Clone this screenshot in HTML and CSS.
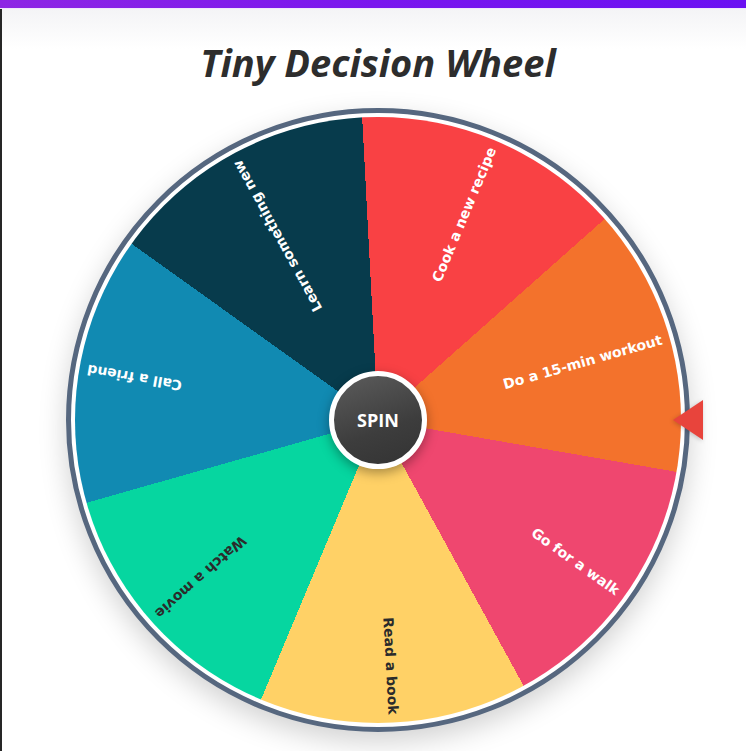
FILE: index.html
```html
<!DOCTYPE html>
<html lang="en">
<head>
<meta charset="utf-8">
<title>Tiny Decision Wheel</title>
<link rel="stylesheet" href="styles.css">
</head>
<body>
<div class="topbar"></div>
<main class="app">
  <h1 class="title">Tiny Decision Wheel</h1>
  <div class="wheel-wrap">
    <div class="wheel">
      <div class="face">
        <div class="label light" style="transform: rotate(-67.29deg)">Cook a new recipe</div>
        <div class="label light" style="transform: rotate(-15.86deg)">Do a 15-min workout</div>
        <div class="label light" style="transform: rotate(35.57deg)">Go for a walk</div>
        <div class="label dark" style="transform: rotate(87deg)">Read a book</div>
        <div class="label dark" style="transform: rotate(138.43deg)">Watch a movie</div>
        <div class="label light" style="transform: rotate(189.86deg)">Call a friend</div>
        <div class="label light" style="transform: rotate(241.29deg)">Learn something new</div>
      </div>
    </div>
    <button class="spin" type="button">SPIN</button>
    <div class="pointer"></div>
  </div>
</main>
</body>
</html>
```

FILE: styles.css
```css
* { box-sizing: border-box; }
html, body { margin: 0; padding: 0; }
body {
  background: #ffffff;
  font-family: "Open Sans", "Liberation Sans", sans-serif;
  height: 751px;
  overflow: hidden;
}
.topbar {
  height: 9px;
  background: linear-gradient(90deg, #8e26e4 0%, #7a16ee 50%, #6b10f2 100%);
  border-bottom: 1px solid #f1e6fb;
}
.app {
  border-left: 2px solid #262626;
  padding-left: 8px;
  padding-top: 31px;
  height: 742px;
  background: linear-gradient(#f4f4f6 0px, #ffffff 40px);
  display: flex;
  flex-direction: column;
  align-items: center;
}
.title {
  margin: 0;
  font-family: "Open Sans", "Liberation Sans", sans-serif;
  font-style: italic;
  font-weight: 700;
  font-size: 38px;
  line-height: 44px;
  color: #2d2d2d;
  letter-spacing: 0;
}
.wheel-wrap {
  position: relative;
  width: 624px;
  height: 624px;
  margin-top: 24px;
}
.wheel {
  width: 624px;
  height: 624px;
  border-radius: 50%;
  border: 5px solid #56677f;
  background: #ffffff;
  padding: 4px;
  box-shadow: 0 10px 28px rgba(0, 0, 0, 0.18);
}
.face {
  position: relative;
  width: 100%;
  height: 100%;
  border-radius: 50%;
  overflow: hidden;
  background: conic-gradient(from -3deg,
    #f94144 0deg 51.43deg,
    #f3722c 51.43deg 102.86deg,
    #ef476f 102.86deg 154.29deg,
    #ffd166 154.29deg 205.71deg,
    #06d6a0 205.71deg 257.14deg,
    #118ab2 257.14deg 308.57deg,
    #073b4c 308.57deg 360deg);
}
.label {
  position: absolute;
  left: 50%;
  top: 50%;
  width: 295px;
  height: 20px;
  margin-top: -10px;
  line-height: 20px;
  transform-origin: 0 50%;
  text-align: right;
  font-family: "DejaVu Sans", "Noto Sans", sans-serif;
  font-weight: 700;
  font-size: 14px;
  white-space: nowrap;
}
.label.light { color: #ffffff; }
.label.dark { color: #2b2b2b; }
.spin {
  position: absolute;
  left: 50%;
  top: 50%;
  width: 98px;
  height: 98px;
  margin: -49px 0 0 -49px;
  border-radius: 50%;
  border: 5px solid #ffffff;
  background: linear-gradient(160deg, #5c5c5c 0%, #3d3d3d 60%, #333333 100%);
  box-shadow: 0 4px 12px rgba(0, 0, 0, 0.35);
  color: #ffffff;
  font-family: "Open Sans", "Liberation Sans", sans-serif;
  font-weight: 700;
  font-size: 18px;
  padding: 0;
  cursor: pointer;
}
.pointer {
  position: absolute;
  right: -13px;
  top: 50%;
  margin-top: -20px;
  width: 0;
  height: 0;
  border-top: 20px solid transparent;
  border-bottom: 20px solid transparent;
  border-right: 30px solid #e8443c;
  filter: drop-shadow(-1px 1px 2px rgba(0, 0, 0, 0.2));
}
```
